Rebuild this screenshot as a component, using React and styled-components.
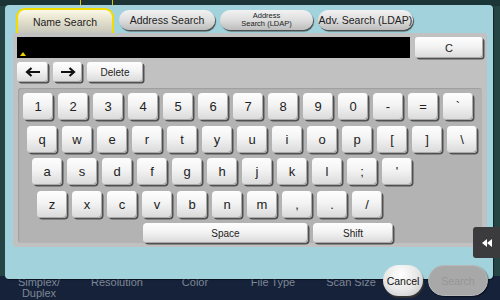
import React from 'react';
import styled, { createGlobalStyle, css } from 'styled-components';

const GlobalStyle = createGlobalStyle`
  html, body { margin: 0; padding: 0; }
  body {
    background: #15233a;
    font-family: 'Liberation Sans', Arial, sans-serif;
  }
`;

const Screen = styled.div`
  position: relative;
  width: 500px;
  height: 300px;
  overflow: hidden;
  background: #244543;
  display: flex;
  flex-direction: column;
  justify-content: space-between;
`;

const BackTop = styled.div`
  height: 6px;
  background: #1b3536;
  display: flex;
`;

const BackTopItem = styled.div`
  margin-left: 80px;
  width: 31px;
  height: 5px;
  border: 1px solid #d9c400;
  border-top: none;
`;

const BackFooter = styled.div`
  height: 24px;
  background: #15223a;
  display: flex;
`;

const FooterLabel = styled.div`
  width: 78px;
  padding-top: 1px;
  text-align: center;
  color: #7f8795;
  font-size: 11px;
  line-height: 11px;
`;

const Dialog = styled.div`
  position: absolute;
  left: 5px;
  top: 5px;
  width: 488px;
  height: 274px;
  background: #a2d3dc;
  border-radius: 4px;
  box-shadow: 1px 1px 1px rgba(0, 0, 0, 0.5);
  display: flex;
  flex-direction: column;
`;

const TabRow = styled.div`
  height: 28px;
  display: flex;
  align-items: flex-start;
  gap: 5px;
  padding-left: 11px;
  box-sizing: border-box;
  padding-top: 3px;
`;

const Tab = styled.div`
  box-sizing: border-box;
  display: flex;
  align-items: center;
  justify-content: center;
  text-align: center;
  color: #222;
  font-size: ${p => (p.$small ? '7.5px' : '10.5px')};
  line-height: ${p => (p.$small ? '8px' : '12px')};
  width: ${p => p.$w}px;
  ${p => p.$active
    ? css`
      height: 25px;
      border: 2px solid #f3dc00;
      border-bottom: none;
      border-radius: 9px 9px 0 0;
      background: linear-gradient(#fbf9ea, #e4e1cc 45%, #c6c6bc);
    `
    : css`
      height: 20px;
      margin-top: 2px;
      border-radius: 10px;
      background: linear-gradient(#f2f2f2, #dedede 50%, #bcbcbc);
      box-shadow: 1px 1.5px 1px #4a4a4a;
    `}
`;

const GrayArea = styled.div`
  margin-left: 8px;
  width: 474px;
  height: 214px;
  box-sizing: border-box;
  background: #c1c1c1;
  border-radius: 0 3px 3px 3px;
  padding: 4px;
  display: flex;
  flex-direction: column;
`;

const InputRow = styled.div`
  display: flex;
  gap: 5px;
`;

const InputField = styled.div`
  position: relative;
  width: 393px;
  height: 21px;
  background: #000;
`;

const Caret = styled.div`
  position: absolute;
  left: 3px;
  bottom: 2px;
  width: 0;
  height: 0;
  border-left: 3px solid transparent;
  border-right: 3px solid transparent;
  border-bottom: 4px solid #f0d400;
`;

const keyFace = css`
  box-sizing: border-box;
  display: flex;
  align-items: center;
  justify-content: center;
  color: #222;
  background: linear-gradient(#fefefe, #f3f3f3 45%, #d9d9d9);
  border-radius: 4px;
  box-shadow: inset -1px -1px 0 #a9a9a9, 1.5px 1.5px 0.5px #505050;
`;

const Button = styled.div`
  ${keyFace};
  width: ${p => p.$w}px;
  height: ${p => p.$h || 20}px;
  font-size: ${p => p.$fs || 10}px;
  border-radius: 3px;
`;

const ArrowRow = styled.div`
  display: flex;
  gap: 5px;
  margin-top: 4px;
`;

const Keyboard = styled.div`
  margin-top: 6px;
  margin-left: 1px;
  width: 464px;
  height: 157px;
  box-sizing: border-box;
  background: #b3b3b3;
  border-radius: 3px;
  box-shadow: inset 1px 1px 1px rgba(0, 0, 0, 0.12);
  padding-top: 5px;
  display: flex;
  flex-direction: column;
  gap: 5.5px;
`;

const KeyRow = styled.div`
  display: flex;
  gap: 5px;
  padding-left: ${p => p.$indent}px;
`;

const Key = styled.div`
  ${keyFace};
  width: ${p => p.$w || 30}px;
  height: ${p => p.$h || 27}px;
  font-size: ${p => p.$fs || 13}px;
`;

const RoundButton = styled.div`
  position: absolute;
  top: 265px;
  left: ${p => p.$x}px;
  width: ${p => p.$w}px;
  height: 31px;
  border-radius: 16px;
  box-sizing: border-box;
  display: flex;
  align-items: center;
  justify-content: center;
  font-size: 10.5px;
  ${p => p.$disabled
    ? css`
      background: #a8a8a8;
      color: #969696;
      border: 1px solid #b8b8b8;
      box-shadow: 1px 1px 1px rgba(0, 0, 0, 0.4);
    `
    : css`
      background: radial-gradient(circle at 45% 30%, #ffffff, #e6e6e6 55%, #bdbdbd);
      color: #111;
      box-shadow: 1px 2px 1px #333;
    `}
`;

const SideTab = styled.div`
  position: absolute;
  left: 473px;
  top: 227px;
  width: 27px;
  height: 31px;
  background: #3b3b3d;
  border-radius: 3px 0 0 3px;
  display: flex;
  align-items: center;
  justify-content: center;
`;

const rows = [
  { indent: 5, keys: ['1', '2', '3', '4', '5', '6', '7', '8', '9', '0', '-', '=', '`'] },
  { indent: 9, keys: ['q', 'w', 'e', 'r', 't', 'y', 'u', 'i', 'o', 'p', '[', ']', '\\'] },
  { indent: 14, keys: ['a', 's', 'd', 'f', 'g', 'h', 'j', 'k', 'l', ';', "'"] },
  { indent: 19, keys: ['z', 'x', 'c', 'v', 'b', 'n', 'm', ',', '.', '/'] },
];

function ArrowIcon({ flip }) {
  return (
    <svg width="16" height="10" viewBox="0 0 16 10" style={flip ? { transform: 'scaleX(-1)' } : undefined}>
      <path d="M2 5 H15 M6.5 1 L2 5 L6.5 9" fill="none" stroke="#111" strokeWidth="2.2" />
    </svg>
  );
}

export default function App() {
  return (
    <>
      <GlobalStyle />
      <Screen>
        <BackTop><BackTopItem /></BackTop>
        <BackFooter>
          <FooterLabel>Simplex/<br />Duplex</FooterLabel>
          <FooterLabel>Resolution</FooterLabel>
          <FooterLabel>Color</FooterLabel>
          <FooterLabel>File Type</FooterLabel>
          <FooterLabel>Scan Size</FooterLabel>
        </BackFooter>

        <Dialog>
          <TabRow>
            <Tab $active $w={98}>Name Search</Tab>
            <Tab $w={96}>Address Search</Tab>
            <Tab $w={93} $small>Address<br />Search (LDAP)</Tab>
            <Tab $w={95}>Adv. Search (LDAP)</Tab>
          </TabRow>
          <GrayArea>
            <InputRow>
              <InputField><Caret /></InputField>
              <Button $w={68} $h={21} $fs={11}>C</Button>
            </InputRow>
            <ArrowRow>
              <Button $w={31}><ArrowIcon /></Button>
              <Button $w={29}><ArrowIcon flip /></Button>
              <Button $w={56}>Delete</Button>
            </ArrowRow>
            <Keyboard>
              {rows.map(row => (
                <KeyRow key={row.keys[0]} $indent={row.indent}>
                  {row.keys.map(k => <Key key={k}>{k}</Key>)}
                </KeyRow>
              ))}
              <KeyRow $indent={125}>
                <Key $w={165} $h={20} $fs={10}>Space</Key>
                <Key $w={80} $h={20} $fs={10}>Shift</Key>
              </KeyRow>
            </Keyboard>
          </GrayArea>
        </Dialog>

        <SideTab>
          <svg width="10" height="8" viewBox="0 0 10 8">
            <path d="M5 0 L0 4 L5 8 Z M10 0 L5 4 L10 8 Z" fill="#fff" />
          </svg>
        </SideTab>
        <RoundButton $x={383} $w={40}>Cancel</RoundButton>
        <RoundButton $x={428} $w={60} $disabled>Search</RoundButton>
      </Screen>
    </>
  );
}
